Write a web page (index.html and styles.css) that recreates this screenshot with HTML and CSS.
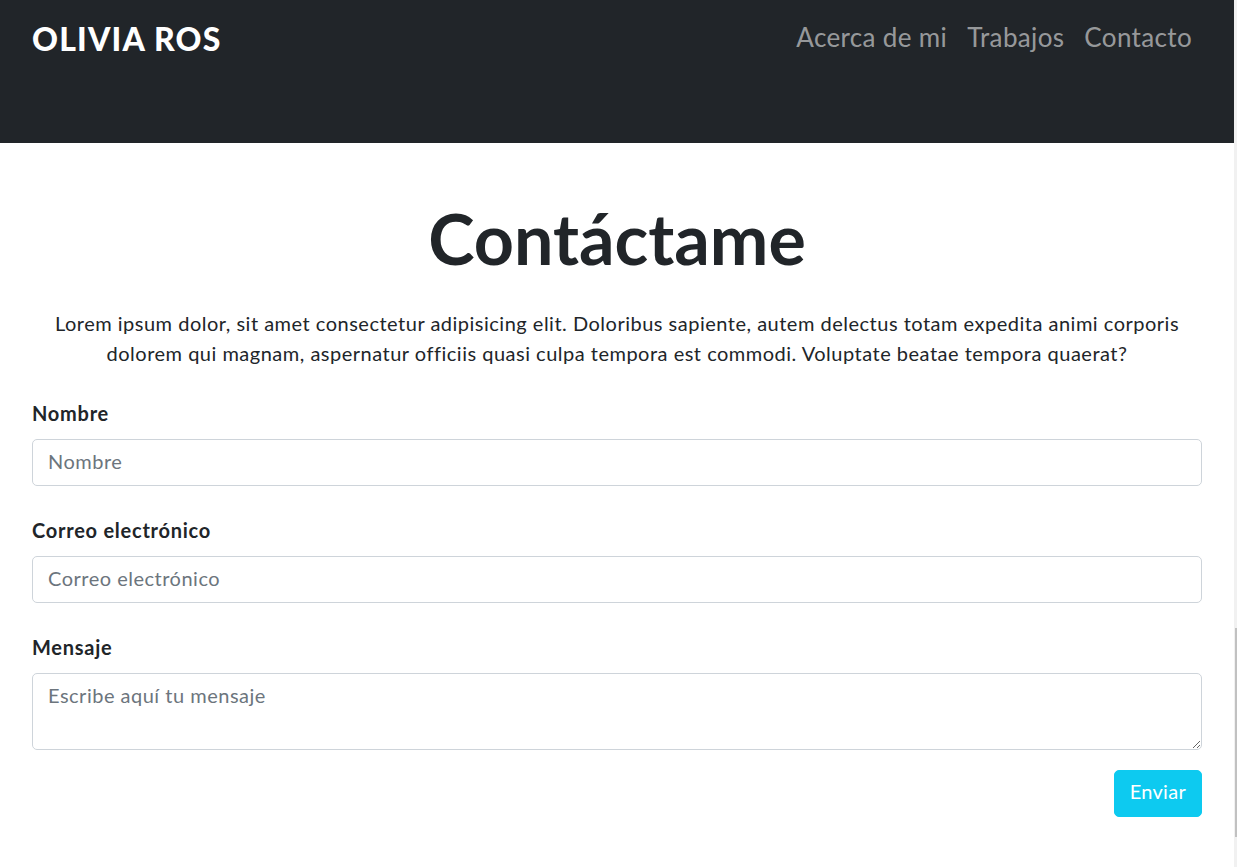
FILE: index.html
```html
<!DOCTYPE html>
<html lang="es">
<head>
<meta charset="utf-8">
<title>Olivia Ros - Contacto</title>
<link rel="stylesheet" href="styles.css">
</head>
<body>
<div class="page">
  <header class="site-header">
    <a class="brand" href="#">OLIVIA ROS</a>
    <nav class="nav">
      <a class="nav-link" href="#">Acerca de mi</a>
      <a class="nav-link" href="#">Trabajos</a>
      <a class="nav-link" href="#">Contacto</a>
    </nav>
  </header>
  <main class="contact">
    <h1 class="contact-title">Contáctame</h1>
    <p class="contact-lead">Lorem ipsum dolor, sit amet consectetur adipisicing elit. Doloribus sapiente, autem delectus totam expedita animi corporis dolorem qui magnam, aspernatur officiis quasi culpa tempora est commodi. Voluptate beatae tempora quaerat?</p>
    <form class="contact-form">
      <div class="form-group">
        <label class="form-label" for="nombre">Nombre</label>
        <input class="form-control" id="nombre" type="text" placeholder="Nombre">
      </div>
      <div class="form-group">
        <label class="form-label" for="correo">Correo electrónico</label>
        <input class="form-control" id="correo" type="email" placeholder="Correo electrónico">
      </div>
      <div class="form-group form-group-last">
        <label class="form-label" for="mensaje">Mensaje</label>
        <textarea class="form-control form-textarea" id="mensaje" rows="2" placeholder="Escribe aquí tu mensaje"></textarea>
      </div>
      <div class="form-actions">
        <button class="btn-send" type="submit">Enviar</button>
      </div>
    </form>
  </main>
</div>
<div class="scrollbar"><div class="scrollbar-thumb"></div></div>
</body>
</html>
```
FILE: styles.css
```css
* { box-sizing: border-box; }
html, body { margin: 0; padding: 0; }
body {
  font-family: "Lato", "Open Sans", sans-serif;
  color: #212529;
  background: #fff;
  overflow: hidden;
}
.page { margin-right: 3px; }

.site-header {
  height: 143px;
  background: #212529;
  padding: 20px 32px 0;
  display: flex;
  justify-content: space-between;
  align-items: flex-start;
}
.brand {
  color: #fff;
  text-decoration: none;
  font-size: 32px;
  line-height: 38px;
  font-weight: 900;
  letter-spacing: 1.2px;
}
.nav {
  display: flex;
  margin-top: 2px;
}
.nav-link {
  color: rgba(255, 255, 255, 0.55);
  text-decoration: none;
  font-size: 26px;
  line-height: 31px;
  letter-spacing: 0.35px;
  padding: 0 10px;
}

.contact {
  padding: 0 32px;
}
.contact-title {
  margin: 53px 0 28px;
  text-align: center;
  font-size: 70px;
  line-height: 84px;
  font-weight: 700;
}
.contact-lead {
  margin: 0 0 31px;
  text-align: center;
  font-size: 20px;
  line-height: 30px;
  letter-spacing: 0.5px;
}
.form-group { margin-bottom: 30px; }
.form-group-last { margin-bottom: 20px; }
.form-label {
  display: block;
  font-size: 20px;
  line-height: 28px;
  font-weight: 700;
  letter-spacing: 0.75px;
  margin-bottom: 12px;
}
.form-control {
  display: block;
  width: 100%;
  height: 47px;
  padding: 5.5px 15px 9.5px;
  font-family: inherit;
  font-size: 20px;
  line-height: 30px;
  letter-spacing: 0.5px;
  color: #495057;
  background: #fff;
  border: 1px solid #ced4da;
  border-radius: 5px;
  outline: none;
}
.form-control::placeholder { color: #6c757d; opacity: 1; }
.form-textarea { height: 77px; resize: both; }
.form-actions {
  display: flex;
  justify-content: flex-end;
}
.btn-send {
  font-family: inherit;
  font-size: 20px;
  line-height: 30px;
  letter-spacing: 0.3px;
  padding: 5px 15px 10px;
  color: #fff;
  background: #0dcaf0;
  border: 1px solid #0dcaf0;
  border-radius: 5px;
  cursor: pointer;
}

.scrollbar {
  position: fixed;
  top: 0;
  right: 0;
  width: 3px;
  height: 100%;
  background: #f1f1f1;
}
.scrollbar-thumb {
  position: absolute;
  top: 628px;
  left: 1px;
  width: 2px;
  height: 209px;
  background: #c1c1c1;
}
```
